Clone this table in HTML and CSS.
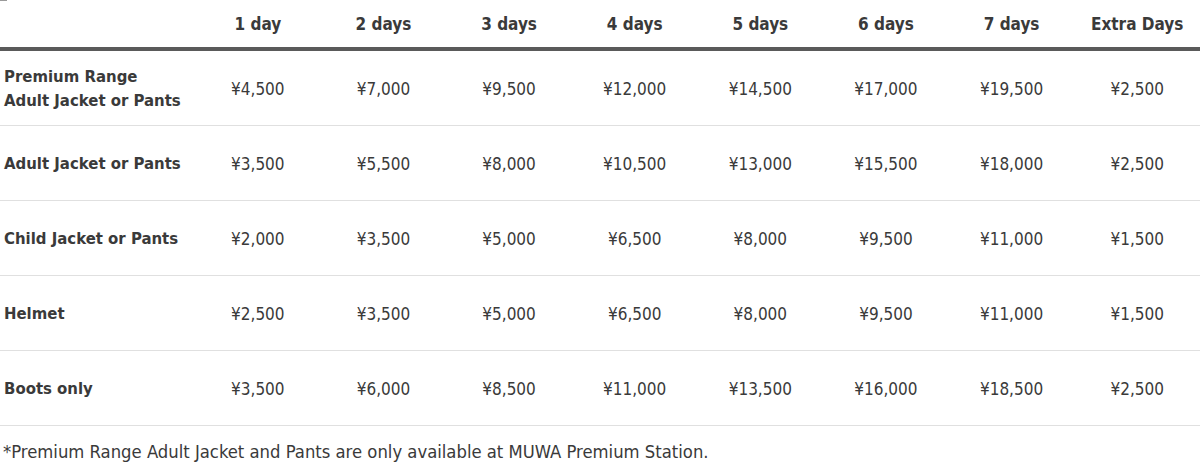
FILE: index.html
```html
<!DOCTYPE html>
<html>
<head>
<meta charset="utf-8">
<link rel="stylesheet" href="styles.css">
</head>
<body>
<div class="page">
  <div class="corner"></div>
  <table class="prices">
    <thead>
      <tr>
        <th class="label"></th>
        <th>1 day</th><th>2 days</th><th>3 days</th><th>4 days</th><th>5 days</th><th>6 days</th><th>7 days</th><th>Extra Days</th>
      </tr>
    </thead>
    <tbody>
      <tr>
        <td class="label">Premium Range<br>Adult Jacket or Pants</td>
        <td>¥4,500</td><td>¥7,000</td><td>¥9,500</td><td>¥12,000</td><td>¥14,500</td><td>¥17,000</td><td>¥19,500</td><td>¥2,500</td>
      </tr>
      <tr>
        <td class="label">Adult Jacket or Pants</td>
        <td>¥3,500</td><td>¥5,500</td><td>¥8,000</td><td>¥10,500</td><td>¥13,000</td><td>¥15,500</td><td>¥18,000</td><td>¥2,500</td>
      </tr>
      <tr>
        <td class="label">Child Jacket or Pants</td>
        <td>¥2,000</td><td>¥3,500</td><td>¥5,000</td><td>¥6,500</td><td>¥8,000</td><td>¥9,500</td><td>¥11,000</td><td>¥1,500</td>
      </tr>
      <tr>
        <td class="label">Helmet</td>
        <td>¥2,500</td><td>¥3,500</td><td>¥5,000</td><td>¥6,500</td><td>¥8,000</td><td>¥9,500</td><td>¥11,000</td><td>¥1,500</td>
      </tr>
      <tr>
        <td class="label">Boots only</td>
        <td>¥3,500</td><td>¥6,000</td><td>¥8,500</td><td>¥11,000</td><td>¥13,500</td><td>¥16,000</td><td>¥18,500</td><td>¥2,500</td>
      </tr>
    </tbody>
  </table>
  <p class="note">*Premium Range Adult Jacket and Pants are only available at MUWA Premium Station.</p>
</div>
</body>
</html>
```

FILE: styles.css
```css
html, body {
  margin: 0;
  padding: 0;
  background: #fff;
}
body {
  font-family: "DejaVu Sans Condensed", "DejaVu Sans", sans-serif;
  color: #3a3a3a;
}
.page {
  width: 1200px;
}
.corner {
  width: 7px;
  height: 1px;
  background: #9a9a9a;
}
.prices {
  width: 1200px;
  border-collapse: collapse;
  table-layout: fixed;
}
.prices th, .prices td {
  text-align: center;
  font-size: 17px;
  padding: 0;
}
.prices th {
  font-weight: bold;
  height: 45px;
  padding-bottom: 1px;
  border-bottom: 4px solid #5a5a5a;
}
.prices th.label {
  width: 195px;
}
.prices td {
  height: 72px;
  border-bottom: 1px solid #e0e0e0;
  line-height: 24px;
  padding-top: 2px;
}
.prices td.label {
  text-align: left;
  font-weight: bold;
  font-size: 16.6px;
  padding-left: 4px;
}
.note {
  margin: 15px 0 0 3px;
  font-size: 18.3px;
}
```
